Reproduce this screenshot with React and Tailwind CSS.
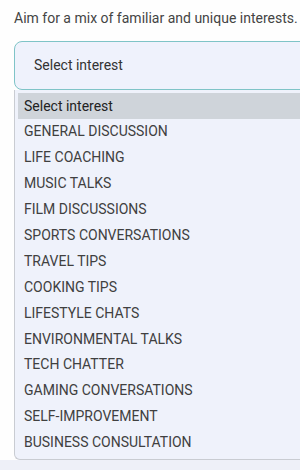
import React from "react";

const interests = [
  "GENERAL DISCUSSION",
  "LIFE COACHING",
  "MUSIC TALKS",
  "FILM DISCUSSIONS",
  "SPORTS CONVERSATIONS",
  "TRAVEL TIPS",
  "COOKING TIPS",
  "LIFESTYLE CHATS",
  "ENVIRONMENTAL TALKS",
  "TECH CHATTER",
  "GAMING CONVERSATIONS",
  "SELF-IMPROVEMENT",
  "BUSINESS CONSULTATION",
];

const App = () => {
  return (
    <div
      className="w-[300px] h-[470px] overflow-hidden bg-[#eef0f8] flex flex-col"
      style={{ fontFamily: "Roboto, 'Liberation Sans', sans-serif" }}
    >
      <div className="bg-[#fefefe] pl-[14px] pt-[9px]">
        <p className="text-[14px] leading-[18px] text-[#444] whitespace-nowrap">
          Aim for a mix of familiar and unique interests.
        </p>
        <div className="mt-[14px] -mr-4 h-[49px] flex items-center pl-[19px] bg-[#eff2fc] border border-[#7fc4c7] rounded-lg text-[14px] text-[#333]">
          Select interest
        </div>
        <div className="-mr-4 bg-[#eff2fb] border-l border-b border-[#c9ccd2] rounded-bl-md pl-[3px] pt-[3px] pb-[3px]">
          <div className="h-[26px] flex items-center pl-[6px] bg-[#cfd4da] text-[14px] text-[#222]">
            Select interest
          </div>
          {interests.map((item) => (
            <div
              key={item}
              className="h-[25.9px] flex items-center pl-[6px] text-[14px] text-[#404040]"
            >
              {item}
            </div>
          ))}
        </div>
      </div>
    </div>
  );
};

export default App;
